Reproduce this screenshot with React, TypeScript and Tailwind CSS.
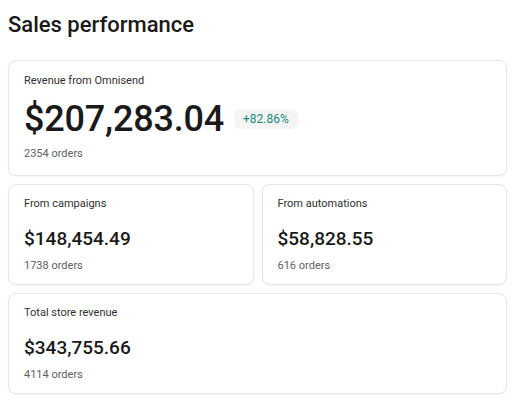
export default function App() {
  const Small = ({ label, amount, orders, grow }: { label: string; amount: string; orders: string; grow?: boolean }) => (
    <div className={(grow ? "flex-1 " : "") + "rounded-lg border border-[#e6e6e6] bg-white pl-[15px] pt-[12px] h-[101px] shrink-0 shadow-[0_1px_2px_rgba(0,0,0,0.05)]"}>
      <div className="text-[11px] leading-[14px] text-[#303030]">{label}</div>
      <div className="mt-[17px] text-[19px] leading-[22px] font-medium text-[#1a1a1a]">{amount}</div>
      <div className="mt-[9px] text-[11px] leading-[14px] text-[#616161]">{orders}</div>
    </div>
  );
  return (
    <div className="w-[512px] h-[412px] bg-white px-[8px] pt-[12px]" style={{ fontFamily: "Roboto, 'Noto Sans', sans-serif" }}>
      <div className="text-[22px] leading-[26px] font-medium text-[#1a1a1a]">Sales performance</div>
      <div className="mt-[22px] flex flex-col gap-[8px] w-[499px]">
        <div className="rounded-lg border border-[#e6e6e6] bg-white pl-[15px] pt-[13px] h-[116px] shrink-0 shadow-[0_1px_2px_rgba(0,0,0,0.05)]">
          <div className="text-[11px] leading-[14px] text-[#303030]">Revenue from Omnisend</div>
          <div className="mt-[9px] flex items-center gap-[10px]">
            <div className="text-[36px] leading-[44px] font-medium text-[#1a1a1a] tracking-[-0.2px]">$207,283.04</div>
            <div className="rounded-[6px] bg-[#f4f5f4] px-[9px] h-[20px] flex items-center text-[12px] text-[#18897a]">+82.86%</div>
          </div>
          <div className="mt-[6px] text-[11px] leading-[14px] text-[#616161]">2354 orders</div>
        </div>
        <div className="flex gap-[8px]">
          <Small grow label="From campaigns" amount="$148,454.49" orders="1738 orders" />
          <Small grow label="From automations" amount="$58,828.55" orders="616 orders" />
        </div>
        <Small label="Total store revenue" amount="$343,755.66" orders="4114 orders" />
      </div>
    </div>
  );
}
